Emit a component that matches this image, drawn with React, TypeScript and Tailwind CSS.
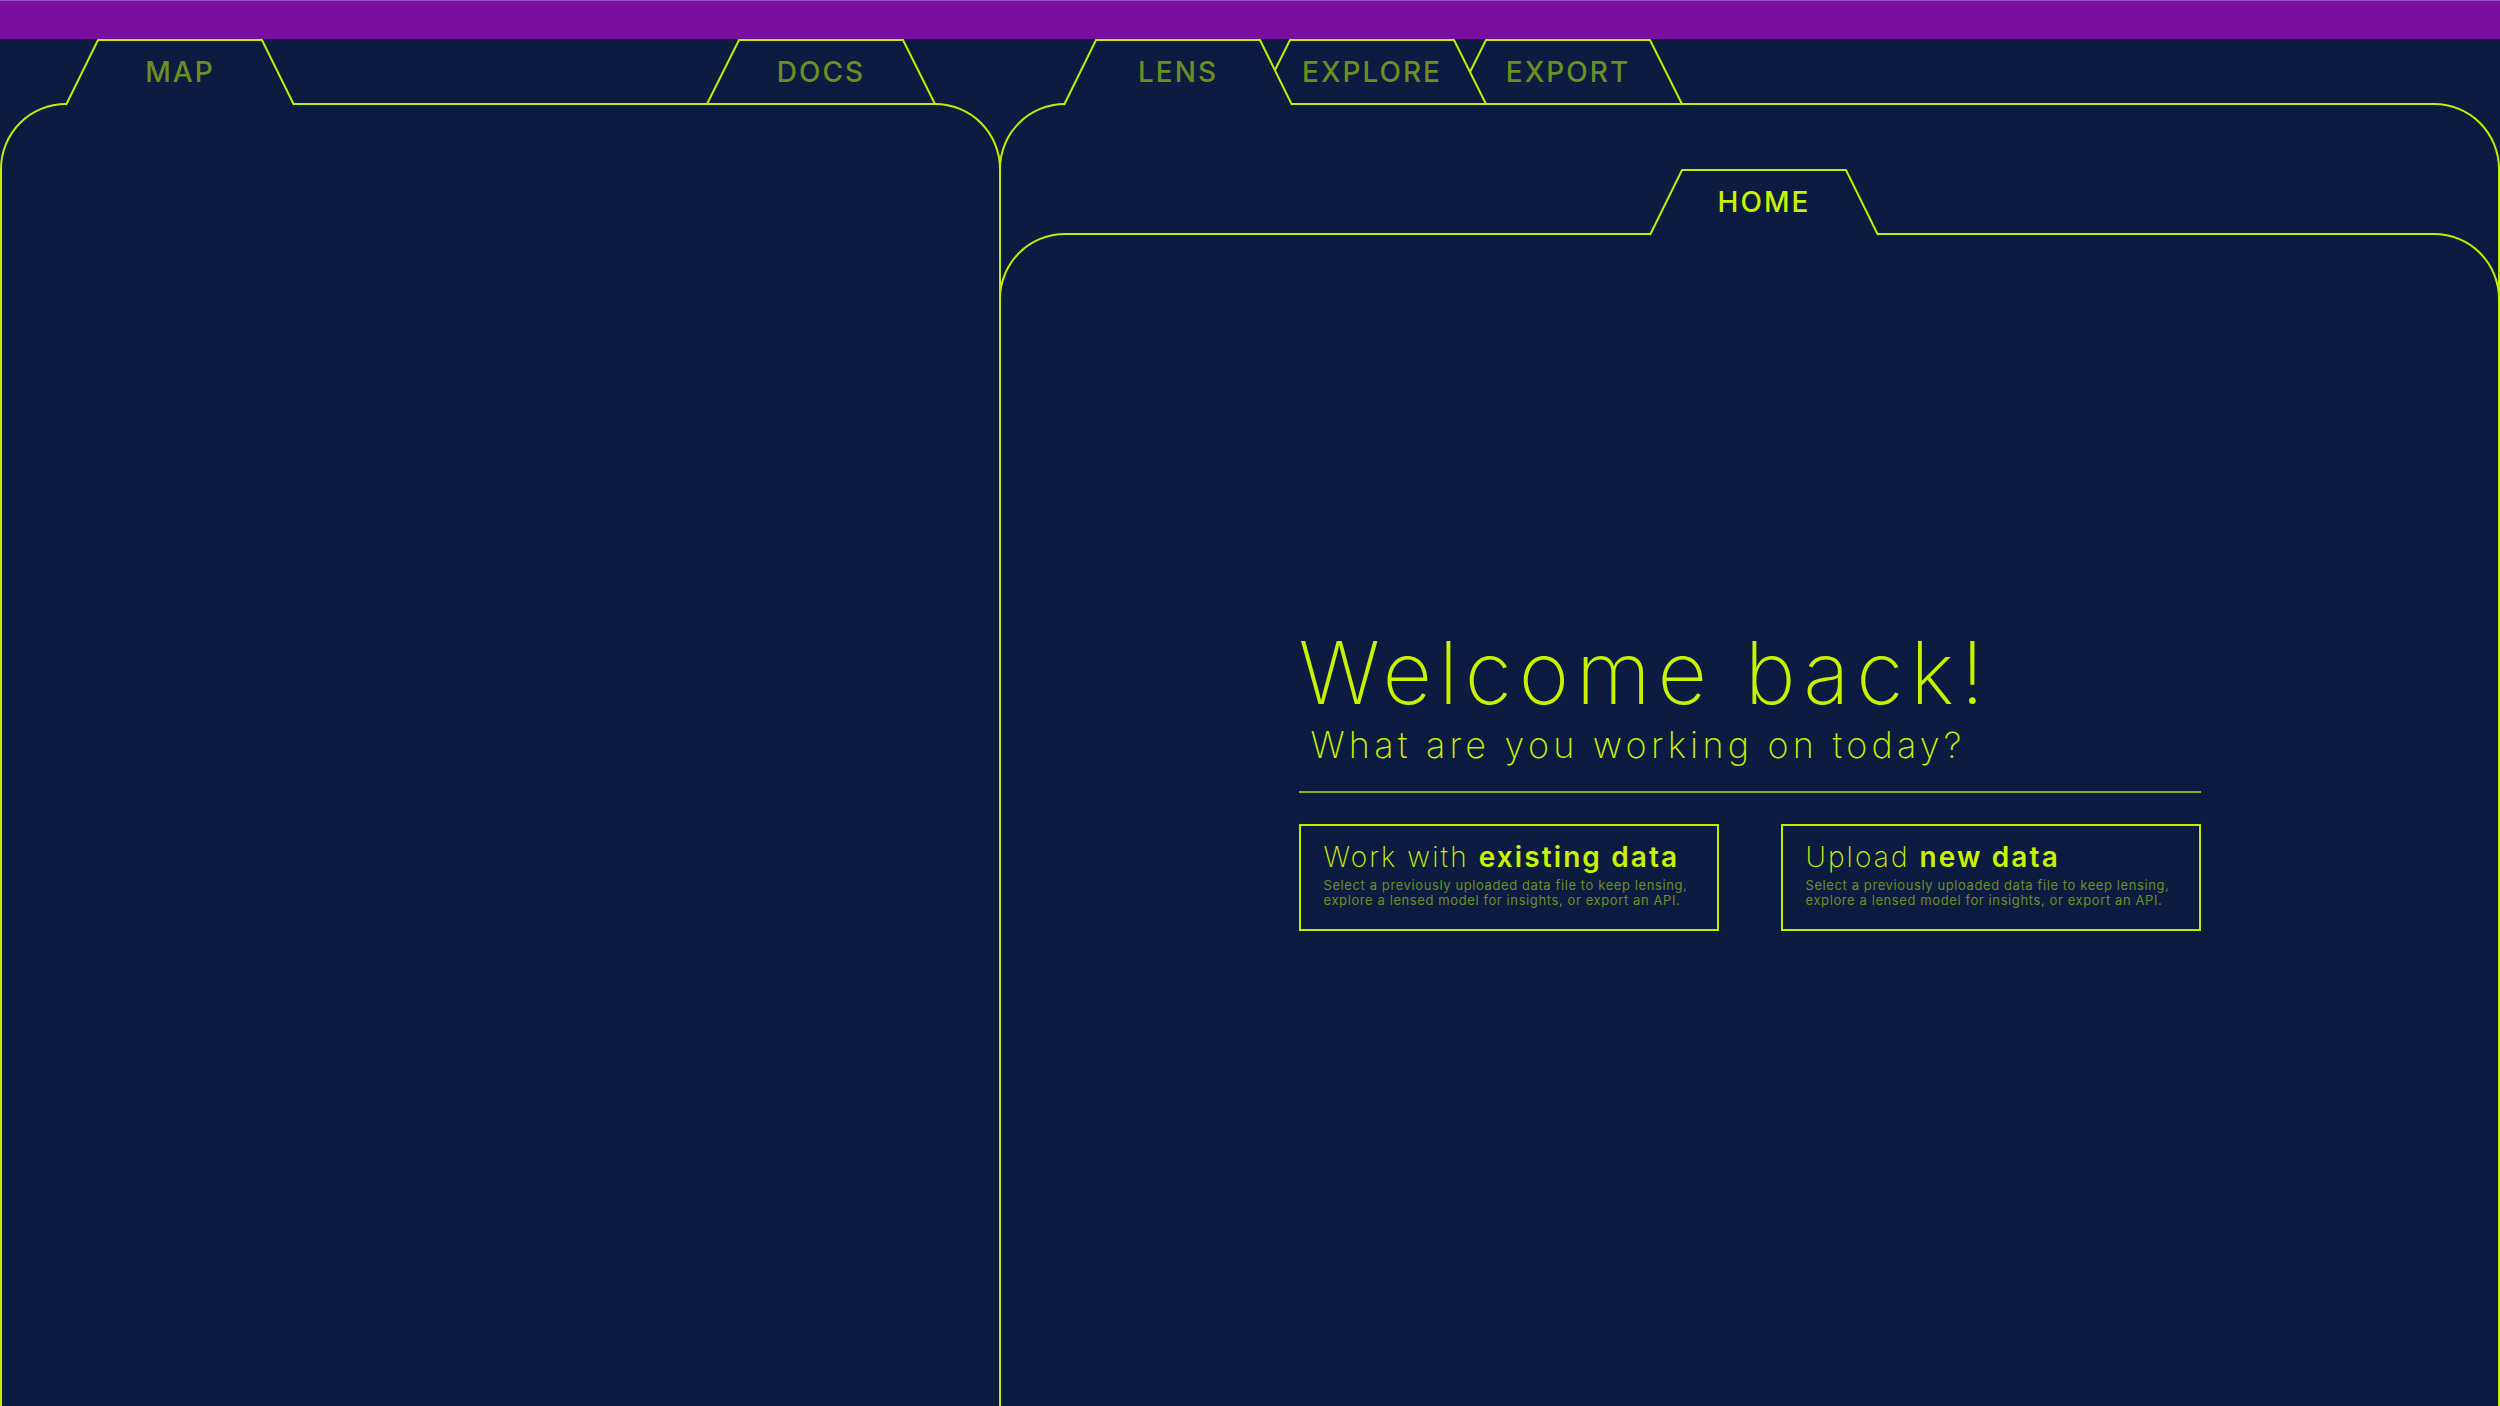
import type { ReactNode } from 'react';

const LIME = '#c4ec00';
const NAVY = '#0c1b40';

type TabProps = {
  label: string;
  active?: boolean;
  className?: string;
};

// folder tab: trapezoid outline; an active tab is open at the bottom and hides the body line
function Tab({ label, active = false, className = '' }: TabProps) {
  return (
    <div className={`relative flex h-[66px] w-[228px] shrink-0 items-center justify-center ${className}`}>
      <svg className="absolute inset-0 h-full w-full overflow-visible" viewBox="0 0 228 66" preserveAspectRatio="none">
        <polygon points="0,66 32,1 196,1 228,66" fill={NAVY} stroke="none" />
        {active ? (
          <polyline points="0,66 32,1 196,1 228,66" fill="none" stroke={LIME} strokeWidth="2" />
        ) : (
          <polygon points="0,65 32,1 196,1 228,65" fill="none" stroke={LIME} strokeWidth="2" />
        )}
      </svg>
      <span
        className={`relative text-[28px] font-medium leading-none tracking-[2px] ${
          label === 'HOME' ? 'text-[#c8f200]' : 'text-[#6b8f23]'
        }`}
      >
        {label}
      </span>
    </div>
  );
}

function ChoiceCard({ light, bold }: { light: string; bold: string }) {
  return (
    <div className="h-[107px] border-2 border-[#c4ec00] pl-[23px] pt-[17px]">
      <h3 className="text-[28px] leading-none tracking-[2.1px] text-[#c8f200]">
        <span className="font-extralight">{light} </span>
        <span className="font-semibold">{bold}</span>
      </h3>
      <p className="mt-[7px] text-[13px] leading-[15px] tracking-[0.6px] text-[#6b8f23]">
        Select a previously uploaded data file to keep lensing,
        <br />
        explore a lensed model for insights, or export an API.
      </p>
    </div>
  );
}

function Body({ children, className = '' }: { children?: ReactNode; className?: string }) {
  return (
    <div
      className={`relative -mt-[2px] flex flex-1 flex-col rounded-t-[66px] border-x-2 border-t-2 border-[#c4ec00] ${className}`}
    >
      {children}
    </div>
  );
}

export default function App() {
  return (
    <div
      className="flex h-screen w-full flex-col overflow-hidden bg-[#0c1b40]"
      style={{ fontFamily: 'Inter, "Noto Sans", sans-serif' }}
    >
      <div className="h-[39px] shrink-0 border-t border-[#9a4cc0] bg-[#7a0f9f]" />

      <div className="flex flex-1">
        {/* left panel */}
        <div className="flex w-[1001px] shrink-0 flex-col">
          <div className="relative z-10 flex h-[66px] justify-between px-[66px]">
            <Tab label="MAP" active />
            <Tab label="DOCS" />
          </div>
          <Body />
        </div>

        {/* right panel */}
        <div className="-ml-[2px] flex flex-1 flex-col">
          <div className="relative z-10 flex h-[66px] pl-[65px]">
            <Tab label="LENS" active className="z-30" />
            <Tab label="EXPLORE" className="z-20 -ml-[34px]" />
            <Tab label="EXPORT" className="z-10 -ml-[32px]" />
          </div>
          <Body>
            <div className="-mx-[2px] flex flex-1 flex-col">
              <div className="relative z-10 flex h-[130px] items-end pl-[651px]">
                <Tab label="HOME" active />
              </div>
              <Body className="items-center">
                <div className="mt-[395px] w-[902px]">
                  <h1 className="text-[86px] font-extralight leading-none tracking-[6.8px] text-[#c8f200]">
                    Welcome back!
                  </h1>
                  <p className="mt-[11px] pl-[12px] text-[36px] font-extralight leading-none tracking-[4.2px] text-[#c8f200]">
                    What are you working on today?
                  </p>
                  <div className="mt-[28px] h-[2px] bg-[#8db31c]" />
                  <div className="mt-[31px] grid grid-cols-2 gap-[62px]">
                    <ChoiceCard light="Work with" bold="existing data" />
                    <ChoiceCard light="Upload" bold="new data" />
                  </div>
                </div>
              </Body>
            </div>
          </Body>
        </div>
      </div>
    </div>
  );
}
